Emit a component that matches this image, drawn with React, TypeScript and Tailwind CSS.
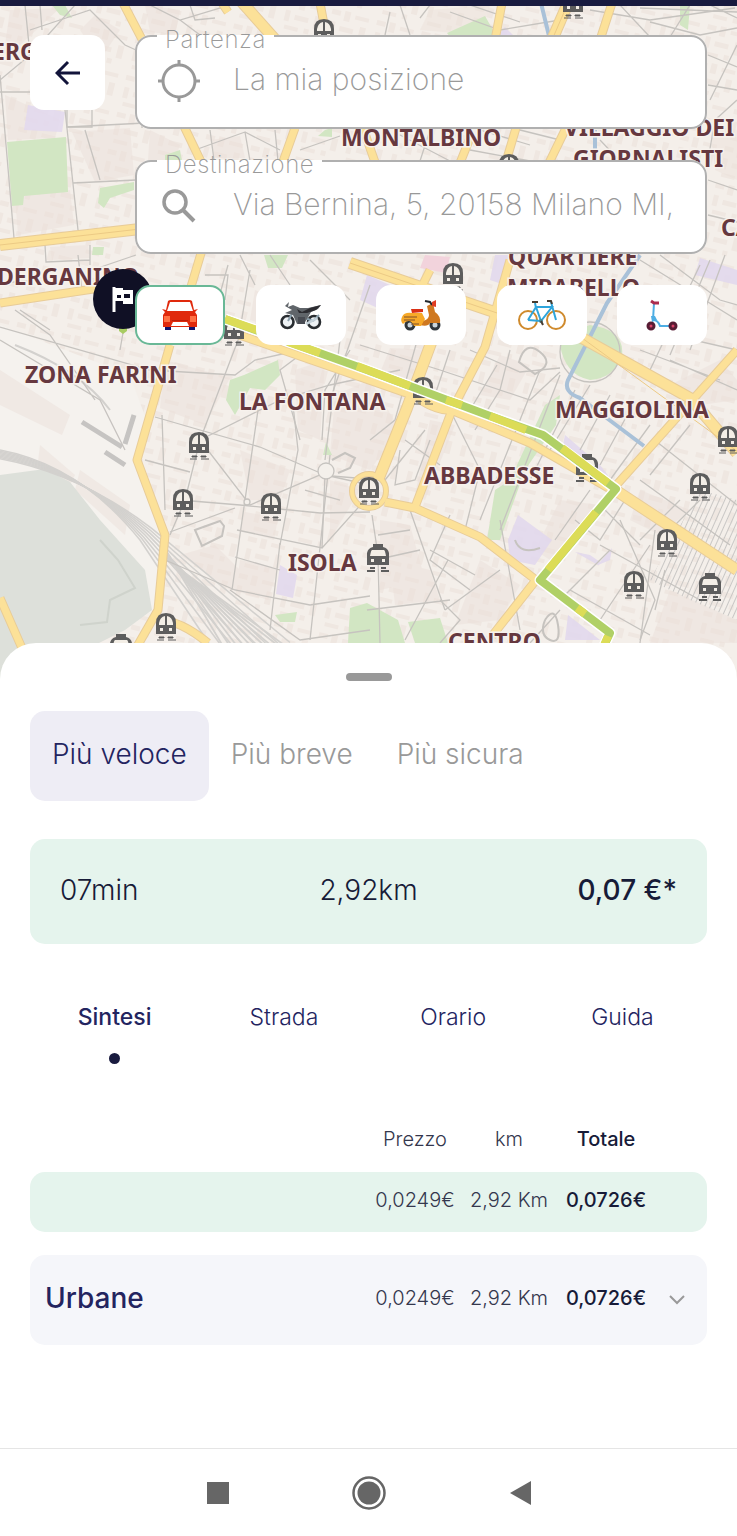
import { useState } from 'react'

const stations = [
  [324, 33], [573, 5], [509, 168], [453, 277], [234, 332], [423, 391], [199, 446],
  [183, 503], [271, 507], [369, 491], [166, 627], [728, 440], [700, 487], [667, 543], [634, 585],
]

const trams = [[587, 468], [378, 558], [710, 587], [121, 648]]

const places = [
  { name: 'ERG', x: -8, y: 60 },
  { name: 'MONTALBINO', x: 341, y: 146 },
  { name: 'VILLAGGIO DEI', x: 564, y: 136 },
  { name: 'GIORNALISTI', x: 573, y: 167 },
  { name: 'CA', x: 721, y: 236 },
  { name: 'DERGANINO', x: -3, y: 285 },
  { name: 'QUARTIERE', x: 508, y: 265 },
  { name: 'MIRABELLO', x: 507, y: 296 },
  { name: 'ZONA FARINI', x: 25, y: 383 },
  { name: 'LA FONTANA', x: 239, y: 410 },
  { name: 'MAGGIOLINA', x: 555, y: 418 },
  { name: 'ABBADESSE', x: 424, y: 484 },
  { name: 'ISOLA', x: 288, y: 571 },
  { name: 'CENTRO', x: 448, y: 650 },
]

const streets = [
  'M25 5L30 55L0 80M30 55L75 5M0 75L14 238M65 110L78 230M67 127L145 123M73 183L136 180M85 130L100 180',
  'M30 30L90 10L125 45L136 50M40 5L42 30M67 110V127H92V110M145 37L142 128M0 92H30',
  'M45 245L46 262L90 260M90 245V265M136 255L92 270M0 283L40 280M20 310L50 330M78 255L82 290',
  'M150 5L180 20L230 5M180 20L200 35M190 5L195 20L215 18M210 130L214 160M195 150L245 132L250 161M245 132L280 150',
  'M275 130L278 161M300 150L340 136M390 12L385 35M400 5L410 35M420 18L430 5M450 12L500 30L560 20M470 5L520 22',
  'M590 10L650 20L735 8M620 5L650 37M650 22L700 35L737 28M690 5L670 37M710 5L737 18M640 8L737 12',
  'M737 45L710 100M708 55L737 67M708 85L737 90M737 100L715 120L708 160M708 180L737 190M708 215L737 222',
  'M400 135L450 161M430 130L420 161M470 150L530 161M480 130L530 145M600 140L620 161M520 130L560 140',
  'M0 327L150 370L235 375L255 360L300 350M120 350L127 310M0 340L100 400L125 450M15 310L50 335L95 400',
  'M155 417L200 430L260 447L318 472M162 415L165 510M145 460L190 472M240 335L200 440L185 500L170 535',
  'M200 440L250 505L320 475L380 480M200 440L280 400L330 385L400 370',
  'M180 500L240 505L320 513L370 512M170 532L235 508M258 410L232 590M293 405L298 450L280 545M340 340L325 460M330 455L310 640',
  'M325 475L370 485M325 475L322 548L237 530M235 557L280 570M322 548L365 500M280 543L270 630M165 560L235 590L310 605L370 596',
  'M345 370L300 355L280 370L300 440M350 350L325 390L322 440M305 490L340 500M230 590L300 640L370 630',
  'M250 270L240 330M228 265L210 330M205 275L228 275L225 300M240 255L255 285M270 255L290 285M310 260L350 300',
  'M370 285L330 400M360 345L440 370L530 400L560 372M450 350L430 410M497 365L470 410M510 350L500 390L475 430',
  'M470 350L520 372L560 368M540 370L480 520M560 375L500 530M575 390L530 480M590 385L550 450M610 395L580 450',
  'M630 410L600 465M650 425L610 480M670 360L737 390M640 350L720 380M657 442L737 505M690 425L650 475',
  'M700 400L730 440M640 480L730 545M590 490L555 540M600 505L640 545M575 520L600 540L625 500',
  'M372 515L378 555L380 643M378 535L410 530M375 560L420 550M410 510L445 610M448 560L405 640M430 550L475 575M450 515L430 560L470 590',
  'M445 610L500 570M367 610L450 600M440 600L460 620L440 643M500 520L510 575L520 630M620 520L655 600L640 640M610 550L560 600L600 630',
  'M570 590L650 635M600 545L700 600M650 545L600 620M655 530L640 643M665 570L655 610M560 610L530 643M680 500L640 540M700 500L660 540',
  'M420 330L395 420L370 440M425 430L385 480M405 440L440 465M400 450L395 485L415 480L430 440M450 410L480 470L465 530',
  'M700 265L650 370M710 260L670 355M725 255L690 350M660 255L720 300L737 305M640 260L737 320M650 330L737 350',
]

const arterials = [
  'M123 3L145 45L205 170M222 3L228 12M320 3L327 40M502 3L495 40M612 3L600 40',
  'M295 128L280 170M516 128L505 165M566 128L548 165M470 138L458 168M363 128L376 165',
  'M0 303L100 288M202 250L190 290M170 345L137 460L165 535L158 610L135 650M158 620Q180 620 208 643',
  'M510 260L485 347L452 410L415 507M430 270L420 290M225 330L432 402L530 443L612 490',
  'M385 502L415 508L480 537L536 580L492 636M737 350L612 490M0 598L25 655M452 410Q440 412 420 400',
]

const wideRoads = [
  'M0 245L140 229', 'M568 3L552 40', 'M240 0L280 45', 'M434 335L407 408L378 480',
  'M350 263L500 314', 'M582 338L690 398L737 453', 'M612 488L737 570',
]

const buildings = [
  'M10 10L60 8L20 45L5 45Z', 'M95 15L120 30L100 60L80 30Z', 'M5 95L60 120L55 138L8 140Z', 'M72 132L130 128L134 175L95 182Z',
  'M50 247L88 245L90 258L52 260Z', 'M15 196L70 190L74 225L18 235Z', 'M145 5L180 10L175 35L150 32Z',
  'M0 370L70 415L62 435L0 405Z', 'M40 445L75 475L70 485L38 462Z', 'M80 470L130 505L125 535L75 490Z', 'M165 360L230 378L205 425L160 408Z',
  'M240 450L290 470L280 500L250 500Z', 'M245 512L278 518L274 540L240 530Z', 'M330 480L360 490L330 540Z', 'M240 560L278 568L268 600L236 588Z',
  'M180 555L215 545L270 600L230 590Z', 'M295 370L325 360L320 440L298 430Z', 'M335 395L370 380L400 430L370 470L330 455Z',
  'M390 348L430 350L410 395L375 385Z', 'M430 420L455 425L425 500L415 495Z', 'M480 560L520 585L500 620L455 625Z', 'M670 590L737 620V643H650Z',
  'M560 500L600 505L550 560L535 550Z', 'M380 520L410 525L425 580L380 590Z', 'M640 490L690 510L660 535L630 520Z', 'M390 560L430 570L440 600L395 605Z',
  'M660 390L720 360L737 380V400L700 405Z', 'M710 125L737 130V180L715 170Z', 'M150 130L180 145L175 160L148 160Z', 'M430 10L490 5L480 35L420 30Z',
  'M500 355L530 365L510 400L480 395Z', 'M210 140L240 136L245 158L215 158Z', 'M255 290L300 310L280 330L250 320Z',
]

const routeLine = 'M225 319L367 370L490 416L543 435L616 489L540 580L610 633L602 650'

function Station({ x, y }: { x: number; y: number }) {
  return (
    <g transform={`translate(${x - 10} ${y - 14})`}>
      <path d="M0 21V10Q0 0 10 0T20 10V21Z" fill="#5d5d5d" />
      <path d="M3 12V10Q4 4 9 3V12ZM11 3Q16 4 17 10V12H11ZM4 15H7V18H4ZM13 15H16V18H13Z" fill="#f3eee6" />
      <path d="M3 24H8V25H3ZM12 24H17V25H12ZM1 27H8M12 27H20" fill="#5d5d5d" stroke="#5d5d5d" />
    </g>
  )
}

function Tram({ x, y }: { x: number; y: number }) {
  return (
    <g transform={`translate(${x - 11} ${y - 14})`}>
      <path d="M6 3V0H16V3Q21 4 22 9V21H0V9Q1 4 6 3Z" fill="#5d5d5d" />
      <path d="M5 6H17Q18 6 19 12H3Q4 6 5 6ZM4 15H7V18H4ZM15 15H18V18H15Z" fill="#f3eee6" />
      <path d="M3 24H8M14 24H19M0 27H8M14 27H22" stroke="#5d5d5d" strokeWidth="2" />
    </g>
  )
}

function CityMap() {
  return (
    <svg viewBox="0 6 737 674" preserveAspectRatio="xMidYMin slice" className="absolute inset-0 h-full w-full" aria-hidden="true">
      <defs>
        <pattern id="houses" width="46" height="38" patternUnits="userSpaceOnUse" patternTransform="rotate(14)">
          <path d="M3 4H12V9H3ZM16 3H22V13H16ZM27 5H41V9H27ZM4 16H9V27H4ZM14 19H28V24H14ZM34 15H40V28H34ZM6 31H20V35H6ZM26 30H31V35H26Z" fill="#eaded7" />
        </pattern>
        <pattern id="rails" width="5" height="5" patternUnits="userSpaceOnUse" patternTransform="rotate(24)">
          <path d="M0 0V5" stroke="#c9c7c5" strokeWidth="2" />
        </pattern>
      </defs>
      <rect width="737" height="680" fill="#f4efea" />
      <rect width="737" height="680" fill="url(#houses)" opacity=".5" />
      <path d="M0 325L130 375L150 430L140 460L165 530L158 620L0 480Z" fill="#f5f2ee" />
      <g fill="#ebdfd9" opacity=".45">
        {buildings.map(d => <path key={d} d={d} />)}
      </g>

      <g fill="#e2d8ee" opacity=".85">
        <path d="M28 105L65 112L62 132L24 130ZM280 565L297 575L293 598L276 594ZM518 515L552 540L535 565L510 560L508 540Z" />
        <path d="M565 435L600 465L610 478L600 478L562 450ZM575 552L590 555L600 562L612 548L610 560L598 565ZM568 615L600 640L565 640ZM700 258L737 270V285L695 275ZM367 275L390 285L382 310L360 300ZM495 255L515 255L505 285L490 280ZM505 27L515 37L497 37Z" />
      </g>
      <path d="M425 255L450 257L446 273L420 268Z" fill="#f2d3dc" />
      <g fill="#d2e6c3">
        <path d="M7 142L66 137L68 192L24 196L23 205L12 206ZM52 5H65L72 18L60 15ZM100 188L134 182V190L110 198L104 208L98 203ZM165 155L180 150L182 161H165Z" />
        <path d="M447 33L485 16L497 37H450ZM93 247H104L103 255H92ZM264 255H288L282 268L268 268ZM244 375L278 360L280 375L265 390L250 388L235 415L226 400L230 380Z" />
        <path d="M545 405L560 395L556 425L525 470L500 540H487L495 490L510 480ZM560 345Q570 330 590 325Q625 330 622 355Q615 378 590 380Q565 375 560 345Z" />
        <path d="M367 603L398 620L405 643H367ZM408 622L440 618L448 643H415ZM275 615L297 612L295 622L280 622ZM350 608L367 603V643H348ZM680 5H690L688 30L680 25ZM325 130L332 128V137L318 136ZM326 442L332 455H323Z" />
      </g>
      <path d="M0 475L45 469L70 482L100 520L145 570L152 610L125 630L95 645L90 680H0Z" fill="#dde0da" />
      <path d="M100 540L118 560L135 588L110 600L107 622L80 625" fill="none" stroke="#cfd3cc" strokeWidth="2" />

      <path d="M700 490L737 500V620L690 600L650 580Z" fill="url(#rails)" />
      <g fill="none" stroke="#d3d1ce">
        {[0, 5, 10, 15, 20, 25, 30, 35].map(n => (
          <path key={n} d={`M0 ${450 + n / 4}Q80 ${465 + n / 4} ${140 + n / 3} ${540 - n / 3}L${220 + n * 2} ${660 - n / 2}`} strokeWidth="1.6" />
        ))}
        {[0, 8, 16, 24, 32, 40, 48, 56, 64, 72].map(n => (
          <path key={n} d={`M167 ${552 + n / 9}L${230 + n} 658`} strokeWidth="1.8" />
        ))}
        <path d="M15 345Q80 370 110 410" strokeWidth="2" />
        <path d="M82 422L122 447M134 415L125 444M105 452L125 465" strokeWidth="5" stroke="#c6c4c2" />
      </g>
      <g fill="none" stroke="#c6c3bf" strokeWidth="1.3">
        {streets.map(d => <path key={d} d={d} />)}
        <circle cx="326" cy="471" r="8" fill="#f4f0eb" />
        <circle cx="247" cy="502" r="3" fill="#f4f0eb" />
        <circle cx="590" cy="352" r="30" />
        <path d="M195 530L220 521L224 526L222 536L202 546ZM332 460L345 453L355 458L350 468L338 473M519 362Q525 340 540 352T535 374Z" strokeWidth="2" />
        <path d="M545 620Q555 605 558 625T550 640T545 620M515 540Q520 555 540 548" strokeWidth="2" />
      </g>
      <path d="M541 3L550 40M595 130V160M640 255L607 303L568 380Q563 392 580 398L644 446" fill="none" stroke="#a9c1d8" strokeWidth="4" />

      <g fill="none" strokeLinejoin="round">
        {arterials.map(d => <path key={d} d={d} stroke="#e8cc98" strokeWidth="9" />)}
        {wideRoads.map(d => <path key={d} d={d} stroke="#e8cc98" strokeWidth="12" />)}
        <circle cx="369" cy="491" r="17" stroke="#e8cc98" strokeWidth="6" />
        {arterials.map(d => <path key={d} d={d} stroke="#fce198" strokeWidth="7" />)}
        {wideRoads.map(d => <path key={d} d={d} stroke="#fce198" strokeWidth="10" />)}
        <circle cx="369" cy="491" r="17" stroke="#fce198" strokeWidth="4" />
        <path d="M0 245L140 229M582 338L737 451M568 3L552 40M350 263L500 314" stroke="#ecca85" />
      </g>

      {stations.map(([x, y]) => <Station key={`${x}-${y}`} x={x} y={y} />)}
      {trams.map(([x, y]) => <Tram key={`${x}-${y}`} x={x} y={y} />)}

      <g fill="none" strokeLinejoin="round">
        <path d={routeLine} stroke="#fff" strokeWidth="11" />
        <path d={routeLine} stroke="#b0d066" strokeWidth="8" />
        <path d="M225 319L257 330M288 342L320 353M357 366L410 386M446 400L462 405M490 416L526 430M562 448L608 483M596 512L548 570M577 608L585 614M608 636L602 650" stroke="#dcdc57" strokeWidth="8" />
      </g>

      <g fill="#66383f" stroke="#f7f2ed" strokeWidth="3" paintOrder="stroke" className="font-['Noto_Sans'] text-[23px] font-bold">
        {places.map(p => <text key={p.name} x={p.x} y={p.y}>{p.name}</text>)}
      </g>

      <path d="M119 326H127V331L123 334L119 331Z" fill="#a8cc62" />
      <circle cx="123" cy="299" r="30" fill="#101025" />
      <path d="M114 287V312" stroke="#fff" strokeWidth="3" />
      <path d="M114 288H123V290H133V304H123V301H114ZM117 295V298H121V295ZM124 294V298H130V294Z" fill="#fff" fillRule="evenodd" />
    </svg>
  )
}

function CarIcon() {
  return (
    <svg viewBox="0 0 38 32" className="h-8 w-[38px]">
      <path d="M4 22H10V31H4ZM28 22H34V31H28Z" fill="#12126b" />
      <path d="M7 2Q8 1 10 1H28Q30 1 31 2L33 11L37 10L34 13L36 16V28H2V16L4 13L1 10L5 11ZM9 3L6 12H32L29 3Z" fill="#e0290c" fillRule="evenodd" />
      <path d="M3 17H9V23H3ZM29 17H35V23H29Z" fill="#ff7043" />
      <path d="M12 23H26L28 27H10Z" fill="#fff" />
      <path d="M11 21H27V22H11Z" fill="#b81f09" />
    </svg>
  )
}

function MotorbikeIcon() {
  return (
    <svg viewBox="0 0 42 32" className="h-8 w-[42px]">
      <g fill="#eef2f5" stroke="#292d31" strokeWidth="2.6">
        <circle cx="7.5" cy="23" r="6" />
        <circle cx="34" cy="23" r="6" />
      </g>
      <path d="M8 22L13 13L17 10M33 22L25 19M33 22L39 16" stroke="#8ba0ad" strokeWidth="2" fill="none" />
      <path d="M5 7L9 3L8 8L13 6L20 9L28 9L41 6L38 10L31 13L27 20L24 25L17 25L13 16L5 14L12 11Z" fill="#60656a" />
      <path d="M17 10L22 13L30 9L41 6L36 11L27 14H19Z" fill="#2c2c31" />
      <path d="M18 18H25V25H18Z" fill="#484b52" />
      <path d="M25 24L37 18L38 20L27 26Z" fill="#c5d2da" />
    </svg>
  )
}

function VespaIcon() {
  return (
    <svg viewBox="0 0 42 32" className="h-8 w-[42px]">
      <g fill="#ccd6dc" stroke="#30363b" strokeWidth="3">
        <circle cx="10" cy="26" r="4" />
        <circle cx="35" cy="26" r="4" />
      </g>
      <path d="M27 7L33 4L35 13Q41 17 40 24H30Q28 28 20 26L22 22Q29 21 29 16Z" fill="#cf781f" />
      <path d="M2 18Q4 13 12 14H22L25 20L21 27H14Q10 18 3 25Q0 22 2 18Z" fill="#f7a928" />
      <path d="M4 18H17M4 21H15M11 25H19" stroke="#815126" />
      <path d="M11 10H23V13L12 14Z" fill="#da3015" />
      <path d="M25 2L30 3L32 6" stroke="#24282c" strokeWidth="2" fill="none" />
      <path d="M32 3L36 1V8L32 7Z" fill="#df3d22" />
    </svg>
  )
}

function BicycleIcon() {
  return (
    <svg viewBox="0 0 48 32" className="h-8 w-12" fill="none">
      <g stroke="#cf8a2d" strokeWidth="2">
        <circle cx="10" cy="21" r="9" />
        <circle cx="38" cy="21" r="9" />
      </g>
      <path d="M10 21L18 8L23 22L34 8H18M10 21L23 22M17 4L18 9M33 3L38 21" stroke="#2ea5dc" strokeWidth="2" />
      <circle cx="23" cy="22" r="2" fill="#468b98" />
      <path d="M23 22L25 26M14 3H20M29 2H33L34 5" stroke="#493d31" strokeWidth="2" />
    </svg>
  )
}

function KickScooterIcon() {
  return (
    <svg viewBox="0 0 32 32" className="h-8 w-8" fill="none">
      <path d="M8 4L7 21M7 21Q12 21 14 27H25" stroke="#4eaee4" strokeWidth="2" />
      <path d="M5 17L9 17L11 21L6 23Z" fill="#4eaee4" />
      <path d="M5 2L8 4L13 4" stroke="#ab2d4e" strokeWidth="3" />
      <g fill="#d94268" stroke="#571c34" strokeWidth="3">
        <circle cx="5" cy="27" r="3" />
        <circle cx="27" cy="27" r="3" />
      </g>
    </svg>
  )
}

const vehicles = [
  { id: 'auto', label: 'Auto', icon: <CarIcon /> },
  { id: 'moto', label: 'Moto', icon: <MotorbikeIcon /> },
  { id: 'scooter', label: 'Scooter', icon: <VespaIcon /> },
  { id: 'bici', label: 'Bici', icon: <BicycleIcon /> },
  { id: 'monopattino', label: 'Monopattino', icon: <KickScooterIcon /> },
]

interface FieldProps {
  id: string
  label: string
  value: string
  icon: React.ReactNode
}

function Field({ id, label, value, icon }: FieldProps) {
  return (
    <fieldset className="min-w-0 rounded-[16px] border-2 border-[#b0b0b0] bg-white pr-5 pl-5">
      <legend className="h-6 px-2 text-[24px] leading-8 font-extralight tracking-wide text-[#999]">
        <label htmlFor={id}>{label}</label>
      </legend>
      <div className="flex h-[79px] items-start gap-8">
        <span className="mt-3 flex w-11 shrink-0 justify-center">{icon}</span>
        <input id={id} defaultValue={value} className="h-[62px] w-full min-w-0 bg-transparent text-[30px] font-extralight text-[#999] outline-none" />
      </div>
    </fieldset>
  )
}

const routes = ['Più veloce', 'Più breve', 'Più sicura']
const sections = ['Sintesi', 'Strada', 'Orario', 'Guida']

export default function App() {
  const [vehicle, setVehicle] = useState('auto')
  const [route, setRoute] = useState('Più veloce')
  const [section, setSection] = useState('Sintesi')

  return (
    <main className="flex min-h-screen flex-col bg-white font-['Inter',sans-serif] text-[#171b38]">
      <header className="relative h-[680px] overflow-hidden border-t-[6px] border-[#191b3f]">
        <CityMap />
        <div className="relative flex gap-[30px] px-[30px] pt-[18px]">
          <button type="button" aria-label="Indietro" className="mt-[11px] flex size-[75px] shrink-0 items-center justify-center rounded-[14px] bg-white">
            <svg viewBox="0 0 26 26" className="size-[26px]" fill="none" stroke="#12143a" strokeWidth="3">
              <path d="M25 13H3M13 2L2 13L13 24" />
            </svg>
          </button>
          <div className="flex min-w-0 flex-1 flex-col gap-5">
            <Field
              id="partenza"
              label="Partenza"
              value="La mia posizione"
              icon={
                <svg viewBox="0 0 42 42" className="size-[42px]" fill="none" stroke="#999" strokeWidth="3">
                  <circle cx="21" cy="21" r="16" />
                  <path d="M21 0V6M21 36V42M0 21H6M36 21H42" />
                </svg>
              }
            />
            <Field
              id="destinazione"
              label="Destinazione"
              value="Via Bernina, 5, 20158 Milano MI,"
              icon={
                <svg viewBox="0 0 42 42" className="size-[42px]" fill="none" stroke="#999" strokeWidth="3.5">
                  <circle cx="17" cy="17" r="11" />
                  <path d="M25 25L36 36" strokeWidth="4" />
                </svg>
              }
            />
            <div className="mt-[11px] flex justify-between">
              {vehicles.map(v => (
                <button
                  key={v.id}
                  type="button"
                  aria-label={v.label}
                  aria-pressed={vehicle === v.id}
                  onClick={() => setVehicle(v.id)}
                  className={`flex h-[60px] w-[90px] items-center justify-center rounded-[15px] border-2 bg-white ${vehicle === v.id ? 'border-[#69b896]' : 'border-white'}`}
                >
                  {v.icon}
                </button>
              ))}
            </div>
          </div>
        </div>
      </header>

      <section className="relative -mt-[37px] flex-1 rounded-t-[36px] bg-white px-[30px] pt-[30px]">
        <div className="mx-auto h-2 w-[46px] rounded-full bg-[#999]" />

        <div className="mt-[30px] flex">
          {routes.map(r => (
            <button
              key={r}
              type="button"
              onClick={() => setRoute(r)}
              className={`h-[90px] rounded-[15px] px-[22px] pb-1 text-[28px] font-light ${route === r ? 'bg-[#eeedf5] text-[#23245f]' : 'text-[#999]'}`}
            >
              {r}
            </button>
          ))}
        </div>

        <div className="mt-[38px] grid h-[105px] grid-cols-3 items-center rounded-[15px] bg-[#e5f4ed] px-[30px] pb-1 text-[28px] font-light">
          <span>07min</span>
          <span className="text-center">2,92km</span>
          <span className="text-right font-medium">0,07 €*</span>
        </div>

        <div className="mt-[58px] grid grid-cols-4">
          {sections.map(s => (
            <button
              key={s}
              type="button"
              onClick={() => setSection(s)}
              className={`flex h-16 flex-col items-center gap-[21px] text-[23px] leading-[30px] text-[#23245f] ${section === s ? 'font-medium' : 'font-light'}`}
            >
              {s}
              {section === s && <span className="size-[11px] rounded-full bg-[#191b3f]" />}
            </button>
          ))}
        </div>

        <table className="mt-10 w-full table-fixed border-separate border-spacing-x-0 border-spacing-y-[23px] text-center text-[20px] leading-5 font-light text-[#34374d]">
          <colgroup>
            <col />
            <col className="w-[100px]" />
            <col className="w-[88px]" />
            <col className="w-[106px]" />
            <col className="w-[48px]" />
          </colgroup>
          <thead>
            <tr>
              <td className="p-0" />
              <th className="p-0 font-light">Prezzo</th>
              <th className="p-0 font-light">km</th>
              <th className="p-0 font-medium text-[#171b38]">Totale</th>
              <td className="p-0" />
            </tr>
          </thead>
          <tbody>
            <tr className="h-[60px] bg-[#e5f4ed]">
              <td className="rounded-l-[15px]" />
              <td className="p-0 pb-1">0,0249€</td>
              <td className="p-0 pb-1">2,92 Km</td>
              <td className="p-0 pb-1 font-medium text-[#171b38]">0,0726€</td>
              <td className="rounded-r-[15px]" />
            </tr>
            <tr className="h-[90px] bg-[#f5f6fa]">
              <th className="rounded-l-[15px] p-0 pb-1 pl-[15px] text-left text-[28px] font-medium text-[#23245f]">Urbane</th>
              <td className="p-0 pb-1">0,0249€</td>
              <td className="p-0 pb-1">2,92 Km</td>
              <td className="p-0 pb-1 font-medium text-[#171b38]">0,0726€</td>
              <td className="rounded-r-[15px] p-0">
                <button type="button" aria-label="Mostra dettagli" className="flex h-10 w-9 items-center justify-center">
                  <svg viewBox="0 0 16 10" className="h-[10px] w-4" fill="none" stroke="#999" strokeWidth="2">
                    <path d="M1 1L8 8L15 1" />
                  </svg>
                </button>
              </td>
            </tr>
          </tbody>
        </table>
      </section>

      <nav className="flex h-[88px] items-center justify-center gap-[117px] border-t border-[#e5e5e5]">
        <button type="button" aria-label="App recenti" className="flex size-[34px] items-center justify-center">
          <span className="size-[22px] bg-[#666]" />
        </button>
        <button type="button" aria-label="Home">
          <svg viewBox="0 0 34 34" className="size-[34px]">
            <circle cx="17" cy="17" r="15.5" fill="none" stroke="#666" strokeWidth="2.5" />
            <circle cx="17" cy="17" r="11.5" fill="#666" />
          </svg>
        </button>
        <button type="button" aria-label="Indietro nel sistema" className="flex size-[34px] items-center justify-center">
          <svg viewBox="0 0 22 26" className="h-[26px] w-[22px]">
            <path d="M1 13L22 1V25Z" fill="#666" />
          </svg>
        </button>
      </nav>
    </main>
  )
}
